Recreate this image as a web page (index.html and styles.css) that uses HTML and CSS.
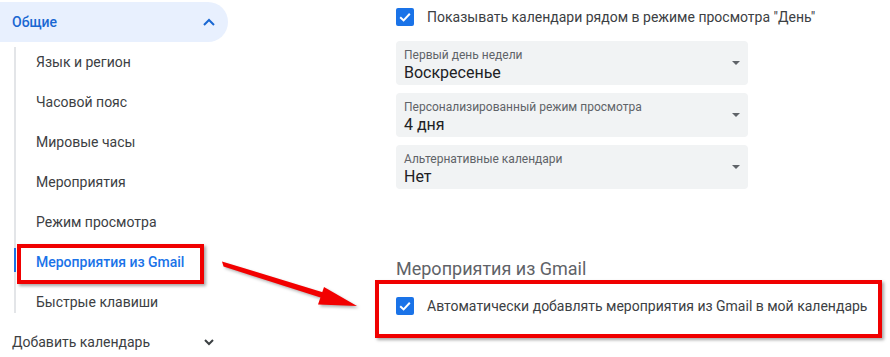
FILE: index.html
```html
<!DOCTYPE html>
<html lang="ru">
<head>
<meta charset="utf-8">
<link rel="stylesheet" href="styles.css">
</head>
<body>
<div class="page">
  <nav class="sidebar">
    <div class="group-head">
      <span>Общие</span>
      <svg class="chev" width="12" height="8" viewBox="0 0 12 8"><path d="M1 7 L6 2 L11 7" fill="none" stroke="#1967d2" stroke-width="2"/></svg>
    </div>
    <ul class="sub">
      <li>Язык и регион</li>
      <li>Часовой пояс</li>
      <li>Мировые часы</li>
      <li>Мероприятия</li>
      <li>Режим просмотра</li>
      <li class="active">Мероприятия из Gmail</li>
      <li>Быстрые клавиши</li>
    </ul>
    <div class="group-foot">
      <span>Добавить календарь</span>
      <svg class="chev" width="12" height="8" viewBox="0 0 12 8"><path d="M2 2 L6 6 L10 2" fill="none" stroke="#3c4043" stroke-width="2"/></svg>
    </div>
  </nav>
  <main class="main">
    <label class="check-row">
      <span class="box"><svg width="18" height="18" viewBox="0 0 18 18"><path d="M4.2 9.2 L7.6 12.4 L13.8 5.8" fill="none" stroke="#fff" stroke-width="2"/></svg></span>
      <span class="check-text">Показывать календари рядом в режиме просмотра "День"</span>
    </label>
    <div class="selects">
      <div class="select">
        <div class="sel-text"><div class="sel-label">Первый день недели</div><div class="sel-value">Воскресенье</div></div>
        <span class="caret"></span>
      </div>
      <div class="select">
        <div class="sel-text"><div class="sel-label">Персонализированный режим просмотра</div><div class="sel-value">4 дня</div></div>
        <span class="caret"></span>
      </div>
      <div class="select">
        <div class="sel-text"><div class="sel-label">Альтернативные календари</div><div class="sel-value">Нет</div></div>
        <span class="caret"></span>
      </div>
    </div>
    <h2 class="section-title">Мероприятия из Gmail</h2>
    <label class="check-row">
      <span class="box"><svg width="18" height="18" viewBox="0 0 18 18"><path d="M4.2 9.2 L7.6 12.4 L13.8 5.8" fill="none" stroke="#fff" stroke-width="2"/></svg></span>
      <span class="check-text">Автоматически добавлять мероприятия из Gmail в мой календарь</span>
    </label>
  </main>
  <div class="mark mark-nav"></div>
  <div class="mark mark-opt"></div>
  <svg class="arrow" width="890" height="357" viewBox="0 0 890 357">
    <g fill="#f20000">
      <polygon points="222,261.5 223.5,266.5 322,298 323.5,292.5"/>
      <polygon points="324,287 318,304.5 357,306"/>
    </g>
  </svg>
</div>
</body>
</html>
```
FILE: styles.css
```css
* { box-sizing: border-box; }
html, body { margin: 0; padding: 0; background: #fff; }
body {
  font-family: Roboto, "Noto Sans", "Liberation Sans", sans-serif;
  color: #3c4043;
  width: 890px;
  height: 357px;
  overflow: hidden;
}
.page {
  position: relative;
  display: grid;
  grid-template-columns: 396px 352px;
  height: 357px;
}
.sidebar { padding-top: 2px; }
.group-head {
  height: 40px;
  width: 228px;
  background: #e8f0fe;
  border-radius: 0 20px 20px 0;
  display: flex;
  align-items: center;
  justify-content: space-between;
  padding: 0 13px 0 12px;
  color: #1967d2;
  font-size: 14px;
  font-weight: 500;
}
.group-head .chev { margin-top: -1px; }
.sub {
  list-style: none;
  margin: 0 0 0 14px;
  padding: 0;
  position: relative;
}
.sub::before {
  content: "";
  position: absolute;
  left: 0;
  top: 5px;
  bottom: 9px;
  width: 2px;
  background: #e3e5e8;
}
.sub li {
  position: relative;
  height: 40px;
  display: flex;
  align-items: center;
  padding-left: 22px;
  font-size: 14px;
  color: #3c4043;
}
.sub li.active {
  color: #1a73e8;
  font-weight: 500;
}
.sub li.active::before {
  content: "";
  position: absolute;
  left: 0;
  top: 6px;
  height: 24px;
  width: 2px;
  background: #1a73e8;
}
.group-foot {
  height: 40px;
  width: 228px;
  display: flex;
  align-items: center;
  justify-content: space-between;
  padding: 0 13px 0 12px;
  font-size: 14px;
  color: #3c4043;
}
.main { padding-top: 0; }
.check-row {
  display: flex;
  align-items: center;
  height: 34px;
  white-space: nowrap;
}
.box {
  width: 18px;
  height: 18px;
  border-radius: 2px;
  background: #1a73e8;
  flex: none;
  display: block;
}
.box svg { display: block; }
.check-text {
  margin-left: 13px;
  font-size: 14px;
  color: #3c4043;
}
.selects {
  margin-top: 7px;
  display: flex;
  flex-direction: column;
  gap: 8px;
}
.select {
  height: 44px;
  background: #f1f3f4;
  border-radius: 4px;
  display: flex;
  align-items: center;
  justify-content: space-between;
  padding: 0 8px 0 8px;
}
.sel-text { padding-top: 5px; }
.sel-label {
  font-size: 12px;
  line-height: 15px;
  color: #5f6368;
}
.sel-value {
  font-size: 16px;
  line-height: 20px;
  color: #202124;
}
.caret {
  width: 0;
  height: 0;
  border-left: 4.5px solid transparent;
  border-right: 4.5px solid transparent;
  border-top: 4.5px solid #5f6368;
  margin-top: 0px;
}
.section-title {
  margin: 68px 0 8px 0;
  font-size: 18px;
  line-height: 24px;
  font-weight: 400;
  color: #5f6368;
}
.mark {
  position: absolute;
  border: 4px solid #f00000;
  box-shadow: 2px 2px 3px rgba(0,0,0,0.35);
  pointer-events: none;
}
.mark-nav { left: 17px; top: 244px; width: 187px; height: 40px; }
.mark-opt { left: 375px; top: 280px; width: 507px; height: 58px; }
.arrow {
  position: absolute;
  left: 0;
  top: 0;
  pointer-events: none;
  filter: drop-shadow(2px 2px 1.5px rgba(0,0,0,0.3));
}
```
